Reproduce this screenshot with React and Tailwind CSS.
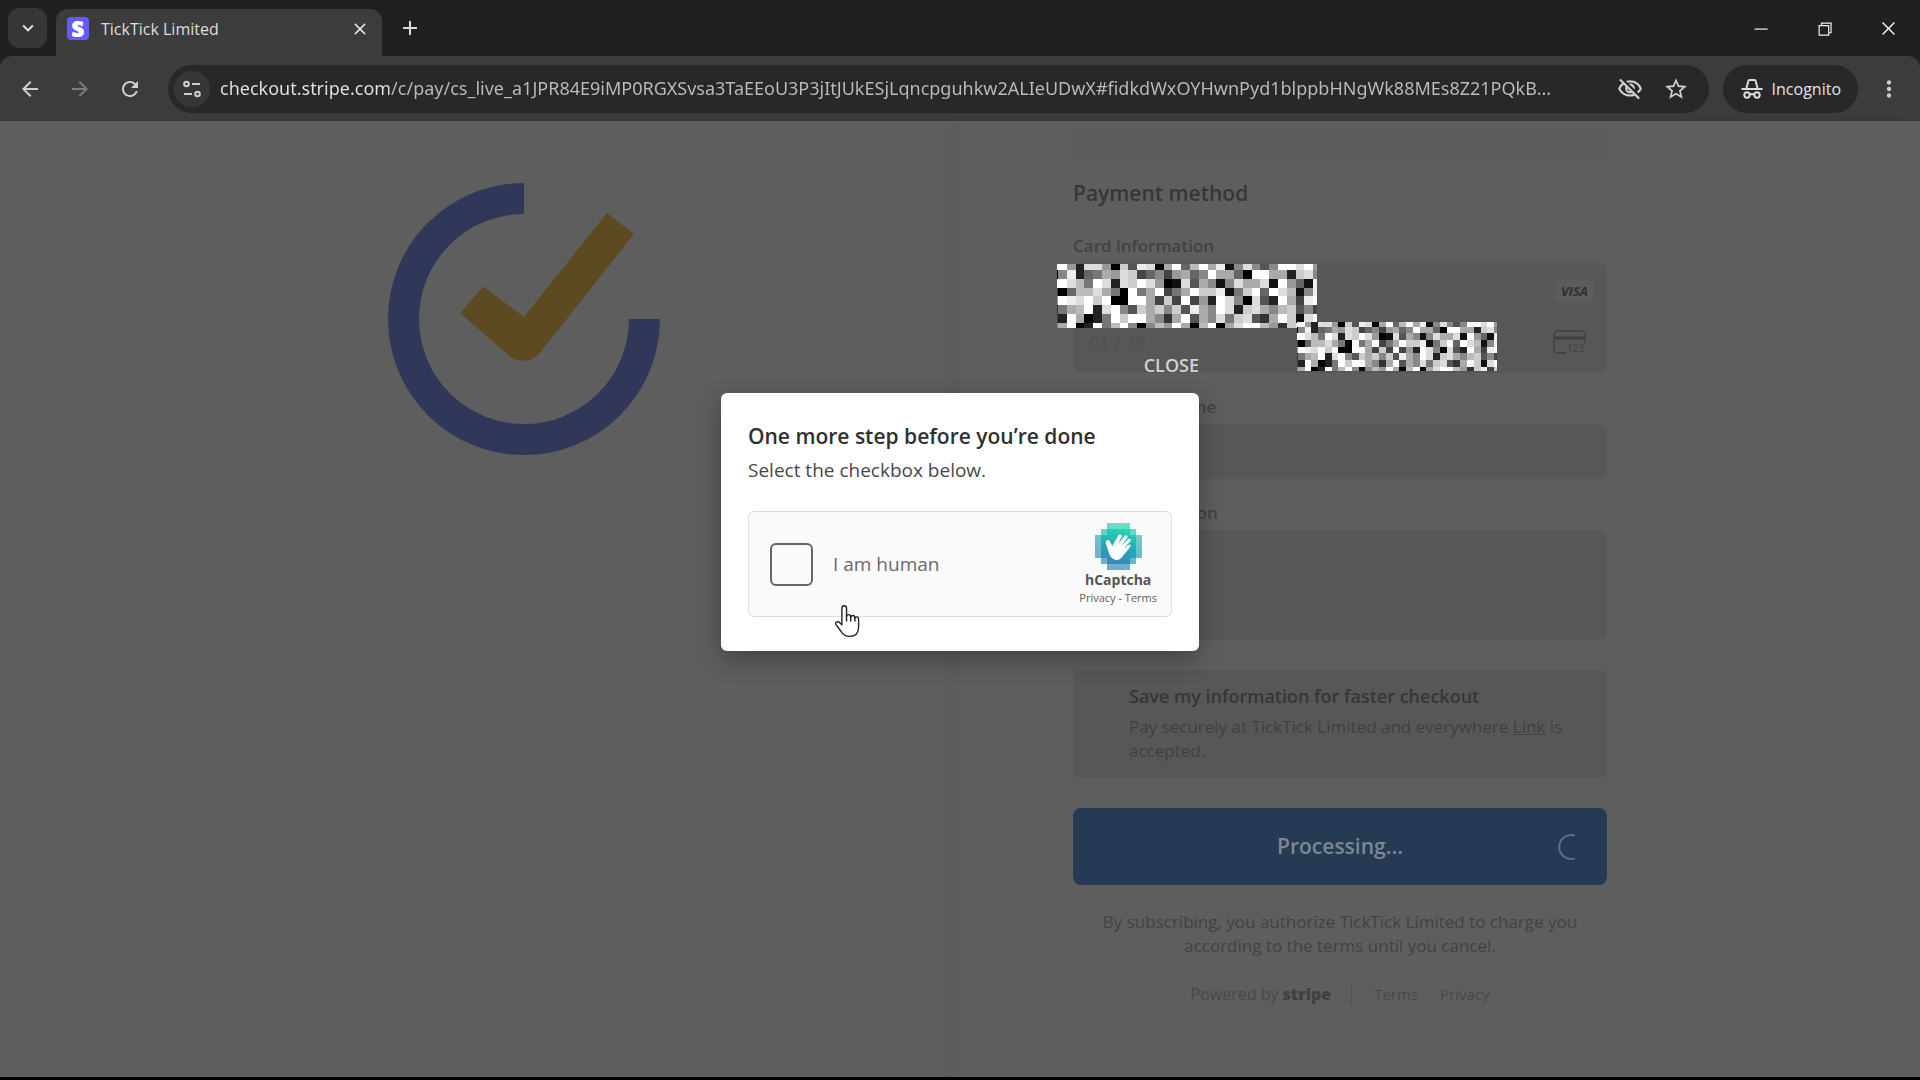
import {
  MdArrowBack,
  MdArrowForward,
  MdRefresh,
  MdMoreVert,
  MdOutlineVisibilityOff,
  MdStarBorder,
  MdClose,
  MdAdd,
  MdKeyboardArrowDown,
} from "react-icons/md";
import {
  VscChromeClose,
  VscChromeMinimize,
  VscChromeRestore,
} from "react-icons/vsc";

const URL_TEXT =
  "checkout.stripe.com/c/pay/cs_live_a1JPR84E9iMP0RGXSvsa3TaEEoU3P3jItJUkESjLqncpguhkw2ALIeUDwX#fidkdWxOYHwnPyd1blppbHNgWk88MEs8Z21PQkB...";

// One hex digit per block, 0 = black, f = white
const NOISE = [
  "ff92dd90c5ed0af6bfae18d858ffdf9",
  "08e267a9dc46849a68faa60ffaa2cd8",
  "ffdb7fd2dcfd901d5a818daad1f961e",
  "406bbda70f7af47afcce17cf6fdb18e",
  "9fedfcf00ffa4c4f492fd80d52fa4ef",
  "37abf2df85cac8c5ea8fd2cda8bc584",
  "42fa027fcffa83af5a8d7cd53afc1df",
  "8af02f7bf808b9fa0bf0adffb93ce4c",
];

const NOISE_Y = [0, 6, 15, 24, 32, 41, 50, 59, 64];

const noiseX = (i) => (i === 0 ? 0 : Math.min(1 + (i - 1) * 8.8, 260));

const Mosaic = ({ className }) => (
  <svg
    viewBox="0 0 260 64"
    preserveAspectRatio="none"
    shapeRendering="crispEdges"
    className={className}
    aria-hidden="true"
  >
    {NOISE.map((row, y) =>
      row.split("").map((c, x) => (
        <rect
          key={`${x}-${y}`}
          x={noiseX(x)}
          y={NOISE_Y[y]}
          width={noiseX(x + 1) - noiseX(x)}
          height={NOISE_Y[y + 1] - NOISE_Y[y]}
          fill={`#${c}${c}${c}`}
        />
      ))
    )}
  </svg>
);

const StripeIcon = () => (
  <span className="flex h-[23px] w-[22px] items-center justify-center rounded bg-[#635bff]">
    <svg viewBox="0 0 24 24" className="h-4 w-4" fill="#fff" stroke="#fff">
      <path d="M13.98 9.48c-2.17-.81-3.36-1.43-3.36-2.41 0-.83.68-1.31 1.9-1.31 2.23 0 4.52.86 6.09 1.63l.89-5.5C18.25 1.3 15.7 0 12.17 0 9.67 0 7.59.65 6.1 1.87 4.56 3.15 3.76 4.99 3.76 7.22c0 4.04 2.47 5.76 6.48 7.22 2.58.92 3.44 1.57 3.44 2.58 0 .98-.84 1.55-2.35 1.55-1.88 0-4.97-.92-6.99-2.11L3.44 22c1.74.98 4.95 1.99 8.29 1.99 2.64 0 4.84-.62 6.33-1.81 1.66-1.3 2.53-3.24 2.53-5.73 0-4.13-2.52-5.85-6.59-7.31z" />
    </svg>
  </span>
);

const SiteInfoIcon = () => (
  <svg viewBox="0 0 24 24" className="h-6 w-6" fill="none" stroke="#cfcfcf" strokeWidth="2">
    <circle cx="6.500" cy="7" r="2.300" />
    <path d="M12 7h8M4 17h8" />
    <circle cx="17.500" cy="17" r="2.300" />
  </svg>
);

const IncognitoIcon = () => (
  <svg viewBox="0 0 24 24" className="h-6 w-6" fill="none" stroke="#dcdcdc" strokeWidth="2">
    <path d="M6.500 11 8.400 3.800Q8.600 3 9.400 3h5.200q.8 0 1 .8L17.500 11" />
    <path d="M1.500 12h21" />
    <circle cx="7" cy="18" r="2.700" />
    <circle cx="17" cy="18" r="2.700" />
    <path d="M9.700 17.600q2.300-1.400 4.600 0" />
  </svg>
);

const TabStrip = () => (
  <div className="flex h-14 items-end bg-[#202020]">
    <button
      aria-label="Search tabs"
      className="mb-2 ml-2 flex h-10 w-[39px] items-center justify-center rounded-xl bg-[#373737] text-[22px] text-[#e3e3e3]"
    >
      <MdKeyboardArrowDown />
    </button>
    <div className="ml-[9px] flex h-[47px] w-[326px] items-center rounded-t-xl bg-[#3c3c3c] pr-3 pb-2 pl-[11px]">
      <StripeIcon />
      <span className="ml-3 flex-1 text-base text-[#dedede]">TickTick Limited</span>
      <button aria-label="Close tab" className="text-[20px] text-[#e3e3e3]">
        <MdClose />
      </button>
    </div>
    <button aria-label="New tab" className="mb-4 ml-4 text-[24px] text-[#dcdcdc]">
      <MdAdd />
    </button>
    <div className="ml-auto flex h-14 items-center text-[19px] text-[#f0f0f0]">
      <button aria-label="Minimize" className="flex w-16 justify-center">
        <VscChromeMinimize />
      </button>
      <button aria-label="Restore" className="flex w-16 justify-center">
        <VscChromeRestore />
      </button>
      <button aria-label="Close" className="flex w-16 justify-center">
        <VscChromeClose />
      </button>
    </div>
  </div>
);

const Toolbar = () => (
  <div className="bg-[#202020]">
    <div className="flex h-[65px] items-center rounded-t-xl bg-[#3c3c3c] text-[#cfcfcf]">
      <div className="flex shrink-0 items-center gap-[26px] pl-[18px] text-[24px]">
        <button aria-label="Back">
          <MdArrowBack />
        </button>
        <button aria-label="Forward" className="text-[#7c7c7c]">
          <MdArrowForward />
        </button>
        <button aria-label="Reload">
          <MdRefresh />
        </button>
      </div>
      <div className="ml-[26px] flex h-12 min-w-0 flex-1 items-center rounded-full bg-[#282828] pr-5 pl-1.5">
        <button
          aria-label="View site information"
          className="flex h-9 w-9 shrink-0 items-center justify-center rounded-full bg-[#373737]"
        >
          <SiteInfoIcon />
        </button>
        <input
          aria-label="Address"
          readOnly
          value={URL_TEXT}
          className="ml-2.5 min-w-0 flex-1 bg-[linear-gradient(90deg,#e6e6e6_169px,#bcbcbc_169px)] bg-clip-text font-['Noto_Sans',sans-serif] text-[18px] text-transparent outline-none"
        />
        <div className="flex shrink-0 items-center gap-5 pl-4 text-[26px]">
          <button aria-label="Third-party cookies blocked">
            <MdOutlineVisibilityOff />
          </button>
          <button aria-label="Bookmark this tab">
            <MdStarBorder />
          </button>
        </div>
      </div>
      <button className="ml-3.5 flex h-12 shrink-0 items-center gap-2 rounded-full bg-[#282828] px-[17px] text-base text-[#e3e3e3]">
        <IncognitoIcon />
        Incognito
      </button>
      <button aria-label="Menu" className="mr-[18px] ml-[18px] text-[26px]">
        <MdMoreVert />
      </button>
    </div>
  </div>
);

const TickTickLogo = () => (
  <svg viewBox="0 0 272 272" className="h-[272px] w-[272px]" aria-label="TickTick">
    <path
      d="M136 15.500A120.500 120.500 0 1 0 256.500 136"
      fill="none"
      stroke="#303759"
      strokeWidth="31"
    />
    <path
      d="M72 130 94 105Q95 104 97 105L136 134 219 30 246 51 151 171Q138 183 123 174Z"
      fill="#5d4a20"
    />
  </svg>
);

const CvcIcon = () => (
  <svg viewBox="0 0 34 26" className="h-[26px] w-[34px]" fill="none" stroke="#404040">
    <rect x="1" y="2" width="31" height="22" rx="4" strokeWidth="1.500" />
    <path d="M1 9h31" strokeWidth="3" />
    <rect x="13" y="14" width="20" height="11" fill="#575757" stroke="none" />
    <text x="14" y="23" fontSize="10" fill="#404040" stroke="none">
      123
    </text>
  </svg>
);

const labelStyle = "mb-[5px] block text-[17px] leading-6 font-semibold text-[#424242]";

const CheckoutForm = () => (
  <form className="w-full max-w-[534px]">
    <div className="h-10 rounded-b-lg bg-[#5d5d5d]" />
    <h2 className="mt-[18px] text-[21px] leading-7 font-semibold text-[#363636]">
      Payment method
    </h2>

    <div className="mt-[27px]">
      <label htmlFor="card" className={labelStyle}>
        Card information
      </label>
      <div className="overflow-hidden rounded-lg bg-[#575757] text-[18px] text-[#505050]">
        <div className="flex h-[55px] items-center pr-[13px]">
          <input id="card" className="h-full min-w-0 flex-1 px-4 outline-none" />
          <span className="rounded bg-[#5c5c5c] px-1.5 text-[13px] leading-[22px] font-bold text-[#303030] italic">
            VISA
          </span>
        </div>
        <div className="flex h-[55px] items-center pr-5 pb-2">
          <input
            aria-label="Expiration date"
            readOnly
            value="01 / 28"
            className="h-full w-1/2 px-4 outline-none"
          />
          <input aria-label="CVC" className="h-full min-w-0 flex-1 px-4 outline-none" />
          <CvcIcon />
        </div>
      </div>
    </div>

    <div className="mt-[22px]">
      <label htmlFor="name" className={labelStyle}>
        Cardholder name
      </label>
      <input id="name" className="h-[55px] w-full rounded-lg bg-[#575757] px-4 outline-none" />
    </div>

    <div className="mt-[22px]">
      <label htmlFor="country" className={labelStyle}>
        Country or region
      </label>
      <div className="overflow-hidden rounded-lg bg-[#575757]">
        <select id="country" className="h-[55px] w-full appearance-none px-4 text-[#505050]">
          <option></option>
        </select>
        <input aria-label="Address line" className="h-[55px] w-full px-4 outline-none" />
      </div>
    </div>

    <div className="mt-[30px] rounded-lg bg-[#575757] pt-3 pr-7 pb-[15px] pl-14">
      <p className="text-[18px] leading-7 font-semibold text-[#363636]">
        Save my information for faster checkout
      </p>
      <p className="mt-[5px] text-[17px] leading-6 text-[#404040]">
        Pay securely at TickTick Limited and everywhere{" "}
        <a href="#" className="underline">
          Link
        </a>{" "}
        is accepted.
      </p>
    </div>

    <button
      type="button"
      className="mt-[30px] grid h-[77px] w-full grid-cols-[1fr_auto_1fr] items-center rounded-lg bg-[#263a54] px-[22px] text-[21px] font-semibold text-[#7b8794]"
    >
      <span className="col-start-2">Processing...</span>
      <svg viewBox="0 0 28 28" className="h-7 w-7 justify-self-end" fill="none">
        <path d="M18 2.600A12 12 0 1 0 18 25.400" stroke="#5d7085" strokeWidth="2" />
      </svg>
    </button>

    <p className="mt-[25px] text-center text-[17px] leading-6 text-[#424242]">
      By subscribing, you authorize TickTick Limited to charge you
      <br />
      according to the terms until you cancel.
    </p>

    <footer className="mt-6 flex items-center justify-center text-[15px] leading-6 text-[#484848]">
      <a href="#" className="text-base leading-6">
        Powered by <span className="font-extrabold text-[#404040]">stripe</span>
      </a>
      <span className="mr-[22px] ml-5 h-6 w-px bg-[#535353]" />
      <a href="#">Terms</a>
      <a href="#" className="ml-[22px]">
        Privacy
      </a>
    </footer>
  </form>
);

const HCaptchaLogo = () => (
  <svg viewBox="0 0 48 48" className="h-[47px] w-[47px]" aria-hidden="true">
    <defs>
      <linearGradient id="hc" x1="0.600" y1="0" x2="0.400" y2="1">
        <stop offset="0" stopColor="#27d6b4" />
        <stop offset="0.500" stopColor="#27a9b5" />
        <stop offset="1" stopColor="#3a86bd" />
      </linearGradient>
    </defs>
    <g fill="url(#hc)" shapeRendering="crispEdges">
      <path
        opacity="0.700"
        d="M12 0H36V6H42V12H48V36H42V42H36V48H12V42H6V36H0V12H6V6H12Z"
      />
      <path d="M12 6H36V12H42V36H36V42H12V36H6V12H12Z" />
    </g>
    <path
      d="M14.500 31.500 11 20.500Q10.800 17.800 13 17.400 14.600 17.300 15.200 18.800L17.600 23.400 24.200 12.300Q25.400 11 26.800 11.900 27.700 12.800 27.200 14L23.600 21.700 30.400 13Q31.600 12 32.800 13 33.700 14 32.800 15.300L26.800 23.400 34 16.400Q35.400 15.600 36.300 16.700 37 17.900 36 19L29 26 34.400 22.200Q35.800 21.700 36.400 22.800 36.700 24 35.600 25L29.400 32.300Q26 37.800 21.600 37.700 16.400 37 14.500 31.500Z"
      fill="#fff"
    />
  </svg>
);

const HandCursor = () => (
  <svg
    viewBox="0 0 28 38"
    className="pointer-events-none absolute top-[92px] left-[85px] h-9 w-[26px]"
    fill="#fff"
    stroke="#222"
    strokeWidth="1.500"
    strokeLinejoin="round"
    strokeLinecap="round"
    aria-hidden="true"
  >
    <path d="M8.500 22V4.500Q8.500 1.500 11 1.500T13.500 4.500V13Q14 11 16 11T18 14Q18.500 12 20.500 12T22.500 15Q23 13.500 24.700 13.500T26.500 16.500V24Q26.500 34.500 16.500 34.500 10.500 34.500 7.500 29L2 21.500Q1.200 19.500 3 18.800 5 18.300 6.500 20Z" />
    <path d="M13.500 12v6M18 13v5M22.500 14v4" fill="none" />
  </svg>
);

const CaptchaDialog = () => (
  <div className="w-[478px]">
    <div className="flex justify-end">
      <button className="text-[18px] leading-7 font-semibold text-[#d2d2d2]">CLOSE</button>
    </div>
    <div
      role="dialog"
      aria-labelledby="captcha-title"
      className="mt-3.5 rounded-md bg-white px-[27px] pt-[29px] pb-[34px] shadow-[0_8px_24px_rgba(0,0,0,0.3)]"
    >
      <h1 id="captcha-title" className="text-[21px] leading-7 font-semibold text-[#303030]">
        One more step before you’re done
      </h1>
      <p className="mt-1 text-[19px] leading-8 text-[#484848]">Select the checkbox below.</p>
      <div className="relative mt-[25px] flex h-[106px] items-center rounded-md border border-[#dedede] bg-[#fafafa] pr-3.5 pl-[21px]">
        <input
          id="human"
          type="checkbox"
          className="h-[43px] w-[43px] appearance-none rounded-md border-2 border-[#666] bg-[#fafafa]"
        />
        <label htmlFor="human" className="ml-5 flex-1 text-[19px] text-[#6a6a6a]">
          I am human
        </label>
        <div className="flex flex-col items-center">
          <HCaptchaLogo />
          <span className="text-[14px] leading-5 font-bold text-[#555]">hCaptcha</span>
          <span className="text-[11px] leading-4 text-[#606060]">
            <a href="#">Privacy</a> - <a href="#">Terms</a>
          </span>
        </div>
        <HandCursor />
      </div>
    </div>
  </div>
);

const App = () => {
  return (
    <div className="flex min-h-screen flex-col bg-[#202020] font-['Open_Sans','Noto_Sans',sans-serif]">
      <TabStrip />
      <Toolbar />
      <main className="relative grid flex-1 grid-cols-2 border-b-[3px] border-black bg-[#5e5e5e]">
        <div className="flex justify-end pt-[62px] pr-[300px]">
          <TickTickLogo />
        </div>
        <div className="pl-[113px] shadow-[-12px_0_12px_rgba(0,0,0,0.02)]">
          <CheckoutForm />
        </div>

        {/* Redacted card details */}
        <Mosaic className="absolute top-[143px] left-[calc(50%+97px)] h-16 w-[260px]" />
        <Mosaic className="absolute top-[201px] left-[calc(50%+337px)] h-[49px] w-[200px]" />

        <div className="absolute inset-x-0 top-[230px] flex justify-center">
          <CaptchaDialog />
        </div>
      </main>
    </div>
  );
};

export default App;
